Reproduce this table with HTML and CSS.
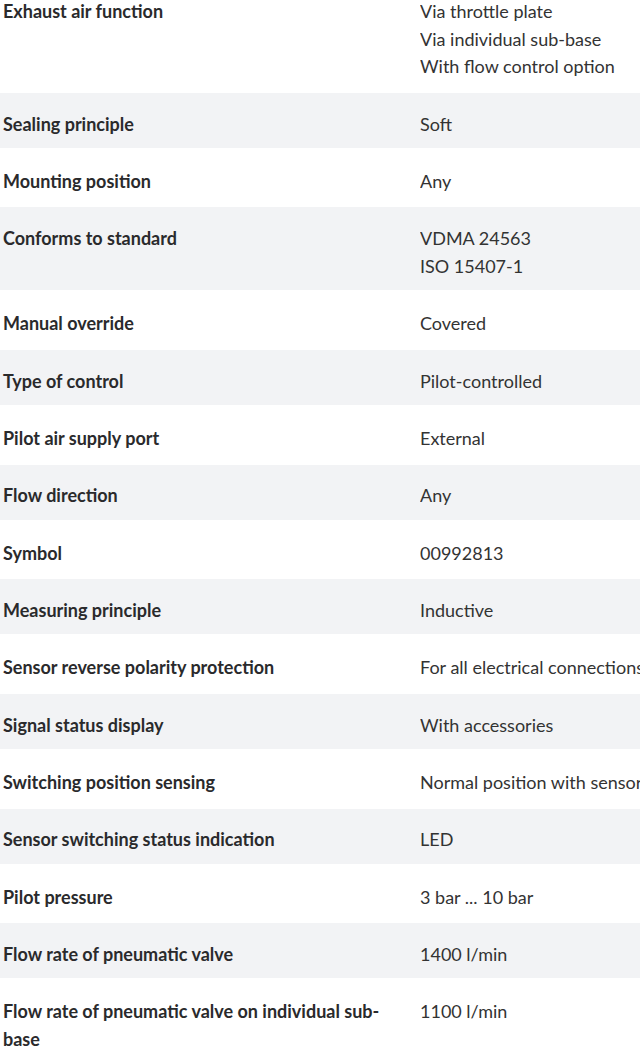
FILE: index.html
```html
<!DOCTYPE html>
<html lang="en">
<head>
<meta charset="utf-8">
<title>Technical data</title>
<link rel="stylesheet" href="styles.css">
</head>
<body>
<div class="specs">
  <div class="row"><div class="label">Exhaust air function</div><div class="value">Via throttle plate<br>Via individual sub-base<br>With flow control option</div></div>
  <div class="row"><div class="label">Sealing principle</div><div class="value">Soft</div></div>
  <div class="row"><div class="label">Mounting position</div><div class="value">Any</div></div>
  <div class="row"><div class="label">Conforms to standard</div><div class="value">VDMA 24563<br>ISO 15407-1</div></div>
  <div class="row"><div class="label">Manual override</div><div class="value">Covered</div></div>
  <div class="row"><div class="label">Type of control</div><div class="value">Pilot-controlled</div></div>
  <div class="row"><div class="label">Pilot air supply port</div><div class="value">External</div></div>
  <div class="row"><div class="label">Flow direction</div><div class="value">Any</div></div>
  <div class="row"><div class="label">Symbol</div><div class="value">00992813</div></div>
  <div class="row"><div class="label">Measuring principle</div><div class="value">Inductive</div></div>
  <div class="row"><div class="label">Sensor reverse polarity protection</div><div class="value">For all electrical connections</div></div>
  <div class="row"><div class="label">Signal status display</div><div class="value">With accessories</div></div>
  <div class="row"><div class="label">Switching position sensing</div><div class="value">Normal position with sensor</div></div>
  <div class="row"><div class="label">Sensor switching status indication</div><div class="value">LED</div></div>
  <div class="row"><div class="label">Pilot pressure</div><div class="value">3 bar ... 10 bar</div></div>
  <div class="row"><div class="label">Flow rate of pneumatic valve</div><div class="value">1400 l/min</div></div>
  <div class="row"><div class="label">Flow rate of pneumatic valve on individual sub-base</div><div class="value">1100 l/min</div></div>
</div>
</body>
</html>
```

FILE: styles.css
```css
html, body {
  margin: 0;
  padding: 0;
  overflow: hidden;
  background: #ffffff;
}

body {
  font-family: Lato, "Noto Sans", sans-serif;
  font-size: 18px;
  color: #333333;
}

.specs {
  width: 100%;
  margin-top: -20px;
  display: flex;
  flex-direction: column;
  gap: 2.35px;
  overflow: hidden;
}

.row {
  display: grid;
  grid-template-columns: 400px minmax(0, 1fr);
  column-gap: 17px;
  padding: 17.8px 0 9.5px 3px;
  line-height: 27.7px;
}

.row:nth-child(even) {
  background: #f2f3f5;
}

.label {
  font-weight: 700;
  color: #2a2a2c;
}

.value {
  white-space: nowrap;
  overflow: hidden;
  color: #333333;
}
```
